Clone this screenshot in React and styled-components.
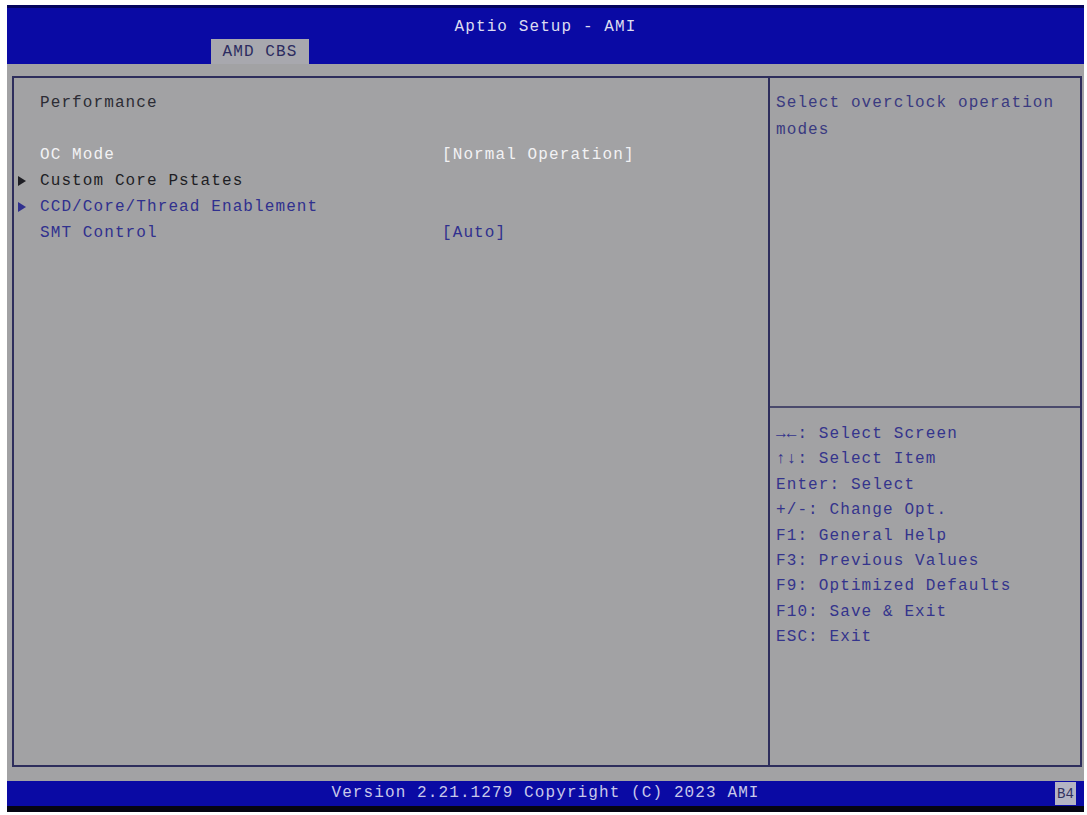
import React from 'react';
import styled, { createGlobalStyle } from 'styled-components';

const GlobalStyle = createGlobalStyle`
  html, body {
    margin: 0;
    padding: 0;
    background: #ffffff;
  }
  body {
    font-family: "Liberation Mono", "DejaVu Sans Mono", monospace;
  }
`;

const Page = styled.div`
  width: 1087px;
  height: 815px;
  padding: 5px 0 0 7px;
  box-sizing: border-box;
  background: #ffffff;
`;

const Screen = styled.div`
  width: 1077px;
  height: 807px;
  background: #a2a2a4;
  display: flex;
  flex-direction: column;
  font-size: 16px;
  letter-spacing: 1.1px;
`;

const Header = styled.div`
  height: 59px;
  background: #0a0aa4;
  border-top: 3px solid #04045e;
  box-sizing: border-box;
  display: flex;
  flex-direction: column;
`;

const Title = styled.div`
  margin-top: 7px;
  height: 24px;
  line-height: 24px;
  text-align: center;
  color: #dcdcf0;
`;

const TabBar = styled.div`
  display: flex;
  padding-left: 204px;
`;

const Tab = styled.div`
  width: 98px;
  height: 25px;
  line-height: 27px;
  background: #a8a8ae;
  color: #2c2c60;
  text-align: center;
`;

const Main = styled.div`
  margin: 12px 2px 0 5px;
  height: 691px;
  border: 2px solid #2e2e5c;
  box-sizing: border-box;
  display: flex;
`;

const LeftPane = styled.div`
  width: 754px;
  padding: 12px 0 0 2px;
  box-sizing: border-box;
`;

const Row = styled.div`
  display: grid;
  grid-template-columns: 24px 402px 1fr;
  height: 26px;
  line-height: 26px;
  color: ${(p) => p.$color};
  white-space: pre;
`;

const Arrow = styled.span`
  display: flex;
  align-items: center;
  padding-left: 2px;
  &::before {
    content: "";
    display: ${(p) => (p.$show ? 'block' : 'none')};
    width: 0;
    height: 0;
    border-top: 5px solid transparent;
    border-bottom: 5px solid transparent;
    border-left: 8px solid ${(p) => p.$color};
  }
`;

const RightPane = styled.div`
  flex: 1;
  border-left: 2px solid #2e2e5c;
  display: flex;
  flex-direction: column;
`;

const HelpText = styled.div`
  height: 330px;
  padding: 12px 0 0 6px;
  box-sizing: border-box;
  line-height: 27px;
  color: #3a3a80;
  border-bottom: 2px solid #4a4a6c;
`;

const KeyList = styled.div`
  padding: 14px 0 0 6px;
  line-height: 25.4px;
  color: #34348c;
  white-space: pre;
`;

const Footer = styled.div`
  margin-top: 14px;
  height: 25px;
  background: #0a0aa4;
  border-bottom: 6px solid #050512;
  display: flex;
  align-items: center;
  position: relative;
`;

const FooterText = styled.div`
  flex: 1;
  text-align: center;
  color: #c8c8ea;
  line-height: 25px;
`;

const Badge = styled.div`
  position: absolute;
  right: 8px;
  top: 1px;
  width: 21px;
  height: 23px;
  line-height: 24px;
  background: #b4b4c4;
  color: #303060;
  font-size: 14px;
  letter-spacing: 0;
  text-align: center;
`;

const items = [
  { label: 'Performance', color: '#2c2c34' },
  { label: '', color: '#2c2c34' },
  { label: 'OC Mode', value: '[Normal Operation]', color: '#f2f2f4' },
  { label: 'Custom Core Pstates', color: '#1e1e24', arrow: true },
  { label: 'CCD/Core/Thread Enablement', color: '#30308e', arrow: true },
  { label: 'SMT Control', value: '[Auto]', color: '#30308e' },
];

const keys = [
  '\u2192\u2190: Select Screen',
  '\u2191\u2193: Select Item',
  'Enter: Select',
  '+/-: Change Opt.',
  'F1: General Help',
  'F3: Previous Values',
  'F9: Optimized Defaults',
  'F10: Save & Exit',
  'ESC: Exit',
];

export default function App() {
  return (
    <Page>
      <GlobalStyle />
      <Screen>
        <Header>
          <Title>Aptio Setup - AMI</Title>
          <TabBar>
            <Tab>AMD CBS</Tab>
          </TabBar>
        </Header>
        <Main>
          <LeftPane>
            {items.map((it, i) => (
              <Row key={i} $color={it.color}>
                <Arrow $show={it.arrow} $color={it.color} />
                <span>{it.label}</span>
                <span>{it.value || ''}</span>
              </Row>
            ))}
          </LeftPane>
          <RightPane>
            <HelpText>
              Select overclock operation
              <br />
              modes
            </HelpText>
            <KeyList>
              {keys.map((k) => (
                <div key={k}>{k}</div>
              ))}
            </KeyList>
          </RightPane>
        </Main>
        <Footer>
          <FooterText>Version 2.21.1279 Copyright (C) 2023 AMI</FooterText>
          <Badge>B4</Badge>
        </Footer>
      </Screen>
    </Page>
  );
}
